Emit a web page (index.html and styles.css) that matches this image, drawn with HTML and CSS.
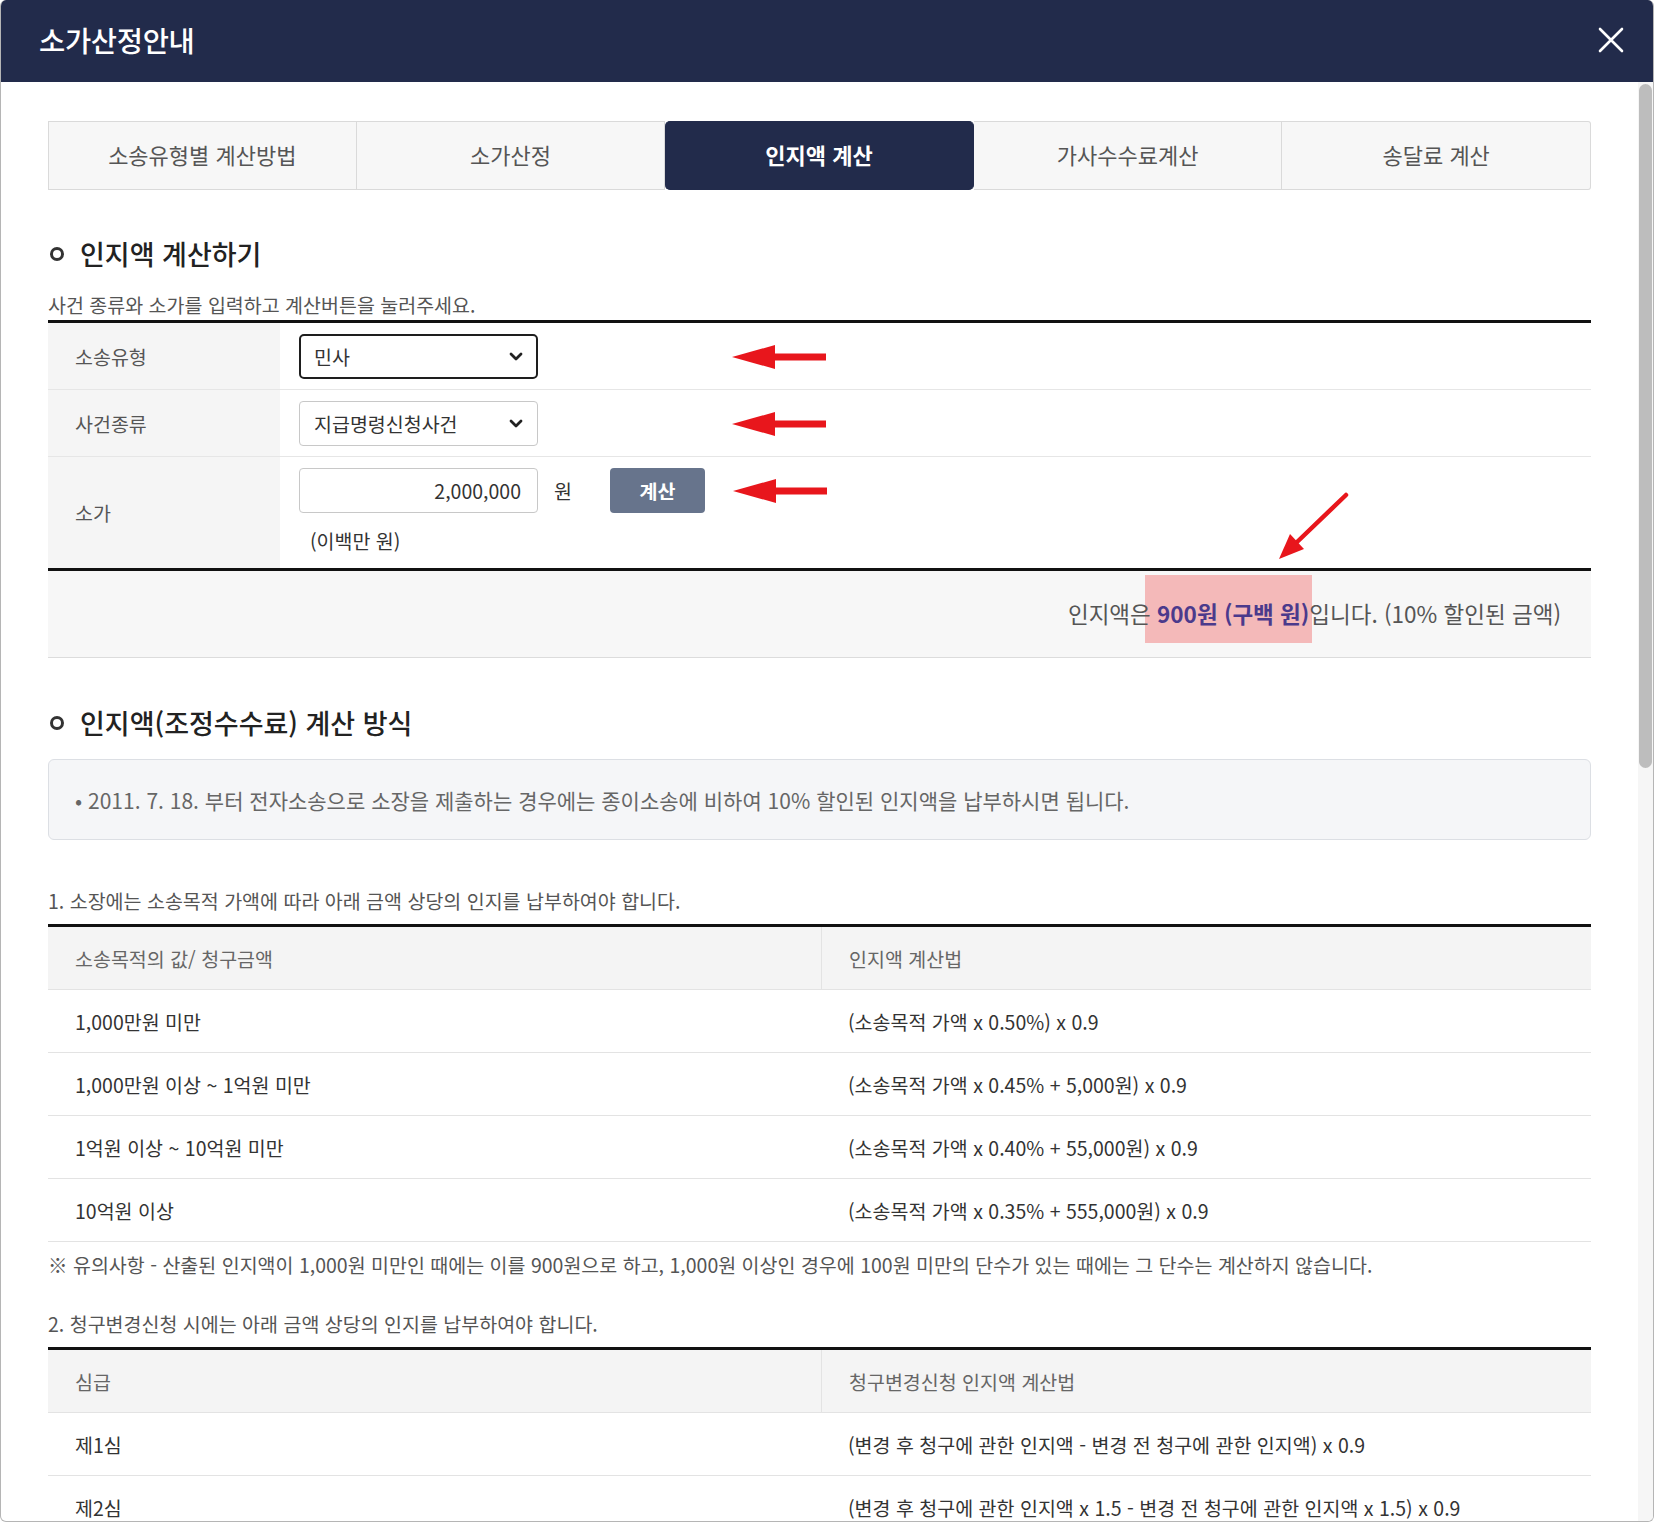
FILE: index.html
```html
<!DOCTYPE html>
<html lang="ko">
<head>
<meta charset="utf-8">
<title>소가산정안내</title>
<link rel="stylesheet" href="styles.css">
</head>
<body>
<div class="modal">
  <header class="modal-header">
    <h1 class="modal-title">소가산정안내</h1>
    <button class="close-btn" type="button" aria-label="닫기">
      <svg width="26" height="26" viewBox="0 0 26 26"><path d="M2 2 L24 24 M24 2 L2 24" stroke="#fff" stroke-width="2.6" stroke-linecap="round"/></svg>
    </button>
  </header>
  <div class="modal-main">
  <div class="modal-body">
    <nav class="tabs">
      <a class="tab">소송유형별 계산방법</a>
      <a class="tab">소가산정</a>
      <a class="tab active">인지액 계산</a>
      <a class="tab">가사수수료계산</a>
      <a class="tab">송달료 계산</a>
    </nav>

    <h2 class="sec-title"><span class="bullet"></span>인지액 계산하기</h2>
    <p class="desc">사건 종류와 소가를 입력하고 계산버튼을 눌러주세요.</p>

    <div class="form-table">
      <div class="form-row">
        <div class="form-label">소송유형</div>
        <div class="form-field">
          <div class="select focused"><span>민사</span><svg class="chev" width="14" height="9" viewBox="0 0 14 9"><path d="M2 2 L7 7 L12 2" fill="none" stroke="#222" stroke-width="2.8" stroke-linecap="round" stroke-linejoin="round"/></svg></div>
          <svg class="arrow arrow-far" width="94" height="24" viewBox="0 0 94 24"><polygon points="0,12 43,0 43,24" fill="#e8161c"/><rect x="40" y="8.5" width="54" height="7" fill="#e8161c"/></svg>
        </div>
      </div>
      <div class="form-row">
        <div class="form-label">사건종류</div>
        <div class="form-field">
          <div class="select"><span>지급명령신청사건</span><svg class="chev" width="14" height="9" viewBox="0 0 14 9"><path d="M2 2 L7 7 L12 2" fill="none" stroke="#222" stroke-width="2.8" stroke-linecap="round" stroke-linejoin="round"/></svg></div>
          <svg class="arrow arrow-far" width="94" height="24" viewBox="0 0 94 24"><polygon points="0,12 43,0 43,24" fill="#e8161c"/><rect x="40" y="8.5" width="54" height="7" fill="#e8161c"/></svg>
        </div>
      </div>
      <div class="form-row">
        <div class="form-label">소가</div>
        <div class="form-field column">
          <div class="field-line">
            <input class="amount" type="text" value="2,000,000">
            <span class="unit">원</span>
            <button class="calc-btn" type="button">계산</button>
            <svg class="arrow arrow-near" width="94" height="24" viewBox="0 0 94 24"><polygon points="0,12 43,0 43,24" fill="#e8161c"/><rect x="40" y="8.5" width="54" height="7" fill="#e8161c"/></svg>
          </div>
          <div class="amount-text">(이백만 원)</div>
        </div>
      </div>
      <svg class="arrow-diag" width="82" height="76" viewBox="0 0 82 76">
        <line x1="74" y1="6" x2="24" y2="54" stroke="#e8161c" stroke-width="4.5" stroke-linecap="round"/>
        <polygon points="7,70 32,60 18,45" fill="#e8161c"/>
      </svg>
    </div>
    <div class="result">인지액은&nbsp;<strong class="hl">900원 (구백 원)</strong>입니다. (10% 할인된 금액)</div>

    <h2 class="sec-title sec-gap"><span class="bullet"></span>인지액(조정수수료) 계산 방식</h2>
    <div class="info-box">• 2011. 7. 18. 부터 전자소송으로 소장을 제출하는 경우에는 종이소송에 비하여 10% 할인된 인지액을 납부하시면 됩니다.</div>

    <p class="list-title first">1. 소장에는 소송목적 가액에 따라 아래 금액 상당의 인지를 납부하여야 합니다.</p>
    <table class="data-table">
      <colgroup><col class="c1"><col class="c2"></colgroup>
      <thead>
        <tr><th>소송목적의 값/ 청구금액</th><th>인지액 계산법</th></tr>
      </thead>
      <tbody>
        <tr><td>1,000만원 미만</td><td>(소송목적 가액 x 0.50%) x 0.9</td></tr>
        <tr><td>1,000만원 이상 ~ 1억원 미만</td><td>(소송목적 가액 x 0.45% + 5,000원) x 0.9</td></tr>
        <tr><td>1억원 이상 ~ 10억원 미만</td><td>(소송목적 가액 x 0.40% + 55,000원) x 0.9</td></tr>
        <tr><td>10억원 이상</td><td>(소송목적 가액 x 0.35% + 555,000원) x 0.9</td></tr>
      </tbody>
    </table>
    <p class="note">※ 유의사항 - 산출된 인지액이 1,000원 미만인 때에는 이를 900원으로 하고, 1,000원 이상인 경우에 100원 미만의 단수가 있는 때에는 그 단수는 계산하지 않습니다.</p>

    <p class="list-title">2. 청구변경신청 시에는 아래 금액 상당의 인지를 납부하여야 합니다.</p>
    <table class="data-table">
      <colgroup><col class="c1"><col class="c2"></colgroup>
      <thead>
        <tr><th>심급</th><th>청구변경신청 인지액 계산법</th></tr>
      </thead>
      <tbody>
        <tr><td>제1심</td><td>(변경 후 청구에 관한 인지액 - 변경 전 청구에 관한 인지액) x 0.9</td></tr>
        <tr><td>제2심</td><td>(변경 후 청구에 관한 인지액 x 1.5 - 변경 전 청구에 관한 인지액 x 1.5) x 0.9</td></tr>
        <tr><td>제3심</td><td>(변경 후 청구에 관한 인지액 x 2 - 변경 전 청구에 관한 인지액 x 2) x 0.9</td></tr>
      </tbody>
    </table>
  </div>
  <div class="scrollbar" aria-hidden="true"><div class="scroll-thumb"></div></div>
  </div>
</div>
</body>
</html>
```

FILE: styles.css
```css
* { box-sizing: border-box; }
html, body { margin: 0; padding: 0; }
body {
  font-family: "Noto Sans CJK KR", "Noto Sans", sans-serif;
  color: #333;
  background: #fff;
}
.modal {
  width: 1654px;
  height: 1522px;
  display: flex;
  flex-direction: column;
  border: 1px solid #b5b5b5;
  border-top: none;
  border-radius: 6px;
  overflow: hidden;
}
.modal-header {
  flex: 0 0 82px;
  background: #222b4b;
  display: flex;
  align-items: center;
  justify-content: space-between;
  padding: 0 29px 2px 38px;
}
.modal-title {
  margin: 0 0 2px;
  color: #fff;
  font-size: 28.5px;
  font-weight: 500;
  letter-spacing: -0.3px;
}
.close-btn {
  background: none;
  border: 0;
  padding: 0;
  width: 26px;
  height: 26px;
  display: flex;
  cursor: pointer;
}
.modal-main {
  flex: 1;
  min-height: 0;
  display: flex;
}
.modal-body {
  flex: 1;
  min-width: 0;
  overflow: hidden;
  padding: 39px 47px 0 47px;
}
.scrollbar {
  flex: 0 0 15px;
  background: #f6f6f6;
  padding: 2px 1px 0;
}
.scroll-thumb {
  height: 684px;
  background: #bdbdbd;
  border-radius: 7px;
}

/* tabs */
.tabs {
  display: grid;
  grid-template-columns: repeat(5, 1fr);
  height: 69px;
}
.tab {
  display: flex;
  align-items: center;
  justify-content: center;
  padding-bottom: 3px;
  background: #f7f7f7;
  border: 1px solid #dadada;
  border-left: none;
  color: #555;
  font-size: 22px;
}
.tab:first-child { border-left: 1px solid #dadada; }
.tab:last-child { border-radius: 0 3px 3px 0; }
.tab.active {
  background: #222b4b;
  border-color: #222b4b;
  color: #fff;
  font-weight: 700;
  border-radius: 5px;
}

/* section titles */
.sec-title {
  margin: 46px 0 0;
  display: flex;
  align-items: center;
  font-size: 27px;
  line-height: 36px;
  font-weight: 500;
  color: #222;
}
.sec-title.sec-gap { margin-top: 47px; }
.bullet {
  width: 14px;
  height: 14px;
  border: 3.5px solid #333;
  border-radius: 50%;
  margin: 0 16px 0 2px;
}
.desc {
  margin: 20px 0 2px;
  font-size: 19.5px;
  line-height: 26px;
  color: #555;
}

/* form */
.form-table {
  position: relative;
  border-top: 3px solid #111;
  border-bottom: 3px solid #111;
}
.form-row {
  display: flex;
  border-top: 1px solid #e6e6e6;
}
.form-row:first-child { border-top: none; }
.form-label {
  width: 232px;
  flex: 0 0 232px;
  background: #f5f5f5;
  padding-left: 27px;
  display: flex;
  align-items: center;
  font-size: 19.5px;
  color: #555;
}
.form-field {
  flex: 1;
  display: flex;
  align-items: center;
  padding: 11px 0 10px 19px;
}
.form-field.column {
  flex-direction: column;
  align-items: flex-start;
  padding-bottom: 14px;
}
.field-line {
  display: flex;
  align-items: center;
}
.select {
  width: 239px;
  height: 45px;
  display: flex;
  align-items: center;
  justify-content: space-between;
  padding: 0 14px 0 14px;
  border: 1px solid #c8c8c8;
  border-radius: 4px;
  font-size: 19.5px;
  color: #333;
  background: #fff;
}
.select.focused {
  border: 2.5px solid #1e1e1e;
  border-radius: 5px;
  padding-left: 13px;
  padding-right: 13px;
}
.chev { display: block; }
.arrow { display: block; flex: 0 0 auto; }
.arrow-far { margin-left: 194px; }
.arrow-near { margin-left: 28px; }
.amount {
  width: 239px;
  height: 45px;
  border: 1px solid #c8c8c8;
  border-radius: 4px;
  padding: 0 16px;
  text-align: right;
  font-family: "Noto Sans CJK KR", "Noto Sans", sans-serif;
  font-size: 19.5px;
  color: #333;
  background: #fff;
}
.unit {
  margin-left: 16px;
  font-size: 19.5px;
  color: #333;
}
.calc-btn {
  margin-left: 38px;
  width: 95px;
  height: 45px;
  border: 0;
  border-radius: 4px;
  background: #67748c;
  color: #fff;
  font-family: "Noto Sans CJK KR", "Noto Sans", sans-serif;
  font-size: 19.5px;
  font-weight: 700;
}
.amount-text {
  margin: 15px 0 0 11px;
  font-size: 19.5px;
  line-height: 26px;
  color: #333;
}
.arrow-diag {
  position: absolute;
  left: 1224px;
  top: 166px;
}

/* result */
.result {
  position: relative;
  z-index: 0;
  height: 87px;
  background: #f7f7f7;
  border-bottom: 1px solid #dcdcdc;
  display: flex;
  align-items: center;
  justify-content: flex-end;
  padding-right: 30px;
  padding-bottom: 3px;
  font-size: 22.5px;
  color: #555;
}
.hl {
  position: relative;
  color: #4b3a8c;
  font-weight: 700;
}
.hl::before {
  content: "";
  position: absolute;
  left: -12px;
  right: -3px;
  top: -22px;
  bottom: -14px;
  background: #f4b9b9;
  z-index: -1;
}

/* info */
.info-box {
  margin-top: 18px;
  background: #f5f6f8;
  border: 1px solid #dcdfe4;
  border-radius: 6px;
  padding: 26px 26px 24px;
  font-size: 21px;
  line-height: 29px;
  color: #666;
}
.list-title {
  margin: 33px 0 10px;
  font-size: 19.5px;
  line-height: 26px;
  color: #555;
}
.list-title.first { margin-top: 48px; }
.data-table {
  width: 100%;
  table-layout: fixed;
  border-collapse: separate;
  border-spacing: 0;
  border-top: 3px solid #111;
}
.data-table col.c1 { width: 773px; }
.data-table th,
.data-table td {
  text-align: left;
  padding: 0 0 0 27px;
  font-size: 19.5px;
  font-weight: 400;
  border-bottom: 1px solid #e3e3e3;
}
.data-table th {
  height: 63px;
  background: #f4f4f4;
  color: #666;
}
.data-table th + th { border-left: 1px solid #e3e3e3; }
.data-table td {
  height: 63px;
  color: #333;
}
.note {
  margin: 10px 0 0;
  font-size: 19.5px;
  line-height: 26px;
  color: #555;
}
```
